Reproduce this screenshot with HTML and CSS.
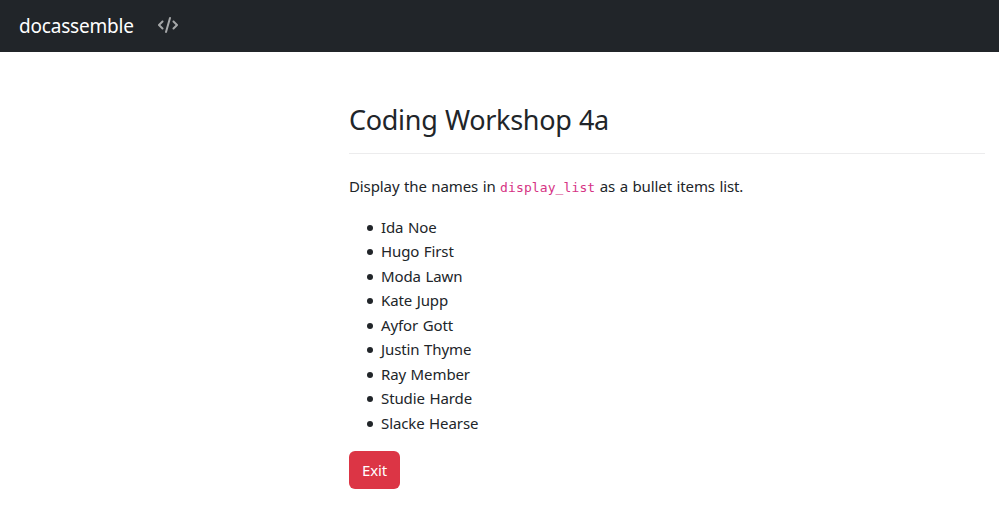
FILE: index.html
```html
<!DOCTYPE html>
<html lang="en">
<head>
<meta charset="utf-8">
<title>Coding Workshop 4a</title>
<link rel="stylesheet" href="styles.css">
</head>
<body>
<header class="navbar">
  <a class="brand">docassemble</a>
  <svg class="code-icon" viewBox="0 0 640 512" aria-hidden="true"><path d="M392.8 1.2c-17-4.900-34.700 5-39.600 22l-128 448c-4.900 17 5 34.700 22 39.600s34.700-5 39.600-22l128-448c4.900-17-5-34.700-22-39.600zm80.600 120.100c-12.500 12.500-12.500 32.800 0 45.300L562.700 256l-89.400 89.400c-12.500 12.500-12.500 32.800 0 45.300s32.800 12.500 45.300 0l112-112c12.500-12.500 12.500-32.800 0-45.300l-112-112c-12.500-12.500-32.800-12.500-45.300 0zm-306.700 0c-12.500-12.500-32.800-12.500-45.300 0l-112 112c-12.500 12.500-12.500 32.800 0 45.300l112 112c12.500 12.500 32.800 12.500 45.300 0s12.500-32.800 0-45.300L77.300 256l89.400-89.400c12.500-12.500 12.500-32.800 0-45.300z"/></svg>
</header>
<main class="question">
  <h1>Coding Workshop 4a</h1>
  <p>Display the names in <code>display_list</code> as a bullet items list.</p>
  <ul>
    <li>Ida Noe</li>
    <li>Hugo First</li>
    <li>Moda Lawn</li>
    <li>Kate Jupp</li>
    <li>Ayfor Gott</li>
    <li>Justin Thyme</li>
    <li>Ray Member</li>
    <li>Studie Harde</li>
    <li>Slacke Hearse</li>
  </ul>
  <button class="exit" type="button">Exit</button>
</main>
</body>
</html>
```
FILE: styles.css
```css
* { box-sizing: border-box; }
body { margin: 0; background: #fff; color: #212529; font: 15px/24.5px "Noto Sans", "Open Sans", sans-serif; letter-spacing: -0.1px; word-spacing: 0.7px; }
.navbar { height: 52px; padding: 0 0 2px 19px; background: #212529; color: #fff; display: flex; align-items: center; }
.brand { width: 139px; padding-top: 2px; font-size: 19px; line-height: 30px; letter-spacing: -0.2px; }
.code-icon { width: 20px; height: 16px; fill: #a6a8a9; }
.question { margin: 50px 14px 0 349px; }
h1 { margin: 0 0 20px; padding-bottom: 15px; border-bottom: 1px solid #ececed; font-size: 27px; font-weight: 400; line-height: 36px; letter-spacing: -0.3px; }
p { margin: 0 0 16px; }
code { color: #d63384; font: 13px/1 "DejaVu Sans Mono", monospace; letter-spacing: 0.1px; }
ul { margin: 0 0 16px; padding-left: 32px; list-style: none; }
li { display: flex; align-items: center; }
li::before { content: ""; width: 6px; height: 6px; margin: 2px 8px 0 -14px; border-radius: 50%; background: currentColor; }
.exit { width: 51px; height: 38px; padding: 0; border: 0; border-radius: 6px; background: #dc3545; color: #fff; font: inherit; letter-spacing: inherit; }
```
